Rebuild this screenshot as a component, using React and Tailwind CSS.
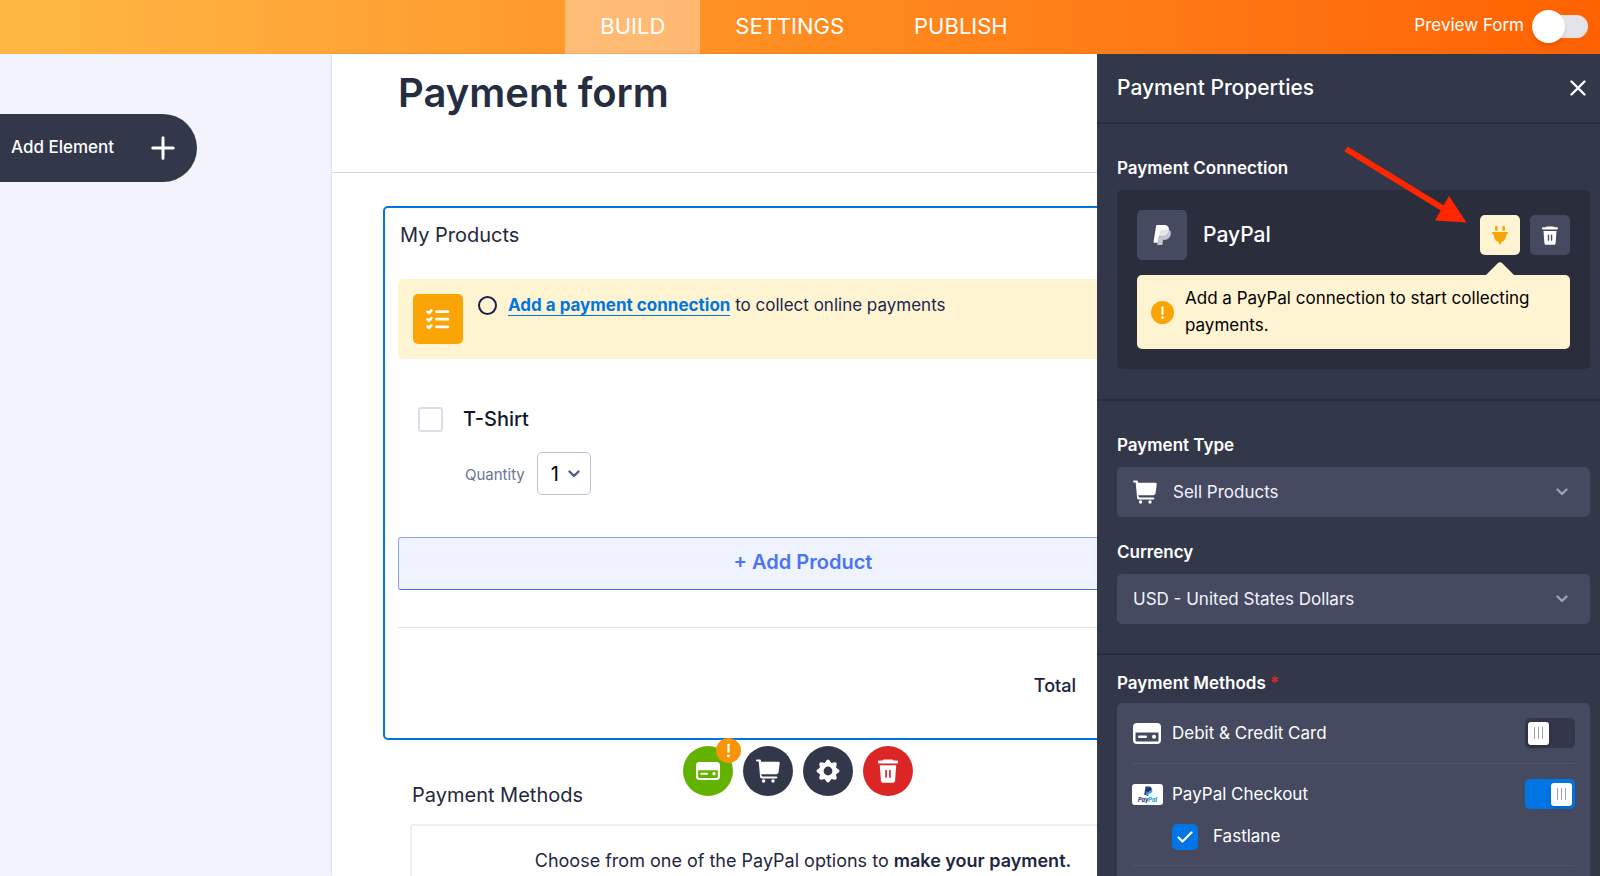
import React from "react";

const PAYPAL_FRONT =
  "M7.076 21.337H2.47a.641.641 0 0 1-.633-.74L4.944.901C5.026.382 5.474 0 5.998 0h7.46c2.57 0 4.578.543 5.69 1.81 1.01 1.15 1.304 2.42 1.012 4.287-.023.143-.047.288-.077.437-.983 5.05-4.349 6.797-8.647 6.797h-2.19c-.524 0-.968.382-1.05.9l-1.12 7.106z";
const PAYPAL_BACK =
  "M21.222 6.917a3.35 3.35 0 0 0-.607-.541c-.013.076-.026.175-.041.254-.93 4.778-4.005 7.201-9.138 7.201h-2.19a.563.563 0 0 0-.556.479l-1.187 7.527h-.506l-.24 1.516a.56.56 0 0 0 .554.647h3.882c.46 0 .85-.334.922-.788.06-.26.76-4.852.816-5.09a.932.932 0 0 1 .923-.788h.58c3.76 0 6.705-1.528 7.565-5.946.36-1.847.174-3.388-.777-4.471z";
const PAYPAL_FOLD =
  "M20.08 6.53c-1.1-.7-2.6-.9-4.3-.9h-4.6c-.6 0-1 .4-1.1.9l-1.5 7.3c.2-.3.4-.5.8-.5h2.06c4.3 0 7.66-1.75 8.64-6.8z";

function PayPalMark({ className, front, back, fold }) {
  return (
    <svg viewBox="0 0 24 24" className={className} aria-hidden="true">
      <path d={PAYPAL_BACK} fill={back} stroke={back} strokeWidth="1" />
      <path d={PAYPAL_FRONT} fill={front} />
      <path d={PAYPAL_FOLD} fill={fold} />
    </svg>
  );
}

function CartIcon({ className }) {
  return (
    <svg viewBox="0 0 24 24" className={className} fill="currentColor" aria-hidden="true">
      <path d="M1 .6h2.6c.8 0 1.3.5 1.4 1.2l.1 1h17.4c.8 0 1.3.6 1.2 1.400l-1.100 8.800c-.2 1.300-1.100 2.200-2.400 2.200H5.200L6 17.600h14.400a.9.900 0 0 1 0 1.800H5.700c-.9 0-1.500-.6-1.600-1.400L2.700 2.400H1A.9.900 0 0 1 1 .6z" />
      <circle cx="7.600" cy="22" r="1.700" />
      <circle cx="17" cy="22" r="1.700" />
    </svg>
  );
}

function TrashIcon({ className }) {
  return (
    <svg viewBox="0 0 20 24" className={className} fill="currentColor" aria-hidden="true">
      <path d="M6 .6h8c.7 0 1 .5 1.200 1H19a1 1 0 0 1 1 1v.8a1 1 0 0 1-1 1H1a1 1 0 0 1-1-1v-.8a1 1 0 0 1 1-1h3.800C5 1.100 5.300.6 6 .6z" />
      <path
        fillRule="evenodd"
        d="M1.800 6.200h16.400l-1.100 15.200c-.1 1.500-1.200 2.400-2.600 2.400h-9c-1.400 0-2.500-.9-2.600-2.400zM7.200 11.500v6.400a.8.800 0 0 0 1.700 0v-6.400a.8.800 0 0 0-1.700 0zm3.900 0v6.400a.8.800 0 0 0 1.700 0v-6.400a.8.800 0 0 0-1.700 0z"
      />
    </svg>
  );
}

function CardIcon({ className }) {
  return (
    <svg viewBox="0 0 28 21" className={className} fill="currentColor" aria-hidden="true">
      <path
        fillRule="evenodd"
        d="M4 0h20a4 4 0 0 1 4 4v13a4 4 0 0 1-4 4H4a4 4 0 0 1-4-4V4a4 4 0 0 1 4-4zM2.500 9.500v7.500c0 1 .6 1.600 1.600 1.600h19.800c1 0 1.600-.6 1.600-1.600V9.500z"
      />
      <rect x="5" y="12.400" width="9" height="2.600" rx="1.200" />
      <circle cx="21" cy="13.800" r="2" />
    </svg>
  );
}

function GearIcon({ className }) {
  return (
    <svg viewBox="-12 -12 24 24" className={className} aria-hidden="true">
      <circle r="6.600" fill="none" stroke="currentColor" strokeWidth="4.400" />
      {[0, 45, 90, 135, 180, 225, 270, 315].map((angle) => (
        <path
          key={angle}
          d="M-3-7.600L-.8-10.900H.8L3-7.600z"
          fill="currentColor"
          stroke="currentColor"
          strokeWidth="1"
          strokeLinejoin="round"
          transform={`rotate(${angle})`}
        />
      ))}
    </svg>
  );
}

function PlugIcon({ className }) {
  return (
    <svg viewBox="0 0 16 19" className={className} fill="currentColor" aria-hidden="true">
      <rect x="3" y="0" width="2.600" height="4.800" rx="1.200" />
      <rect x="10.400" y="0" width="2.600" height="4.800" rx="1.200" />
      <path d="M1.200 6h13.600a1.100 1.100 0 0 1 0 2.400h-.5c0 3.700-1.700 6.400-4.900 7.600l-.4 1.500a1 1 0 0 1-2 0l-.4-1.500c-3.200-1.200-4.900-3.900-4.900-7.600h-.5A1.100 1.100 0 0 1 1.200 6z" />
    </svg>
  );
}

function ChecklistIcon({ className }) {
  return (
    <svg viewBox="0 0 24 20" className={className} fill="none" stroke="currentColor" strokeLinecap="round" strokeLinejoin="round" aria-hidden="true">
      <path strokeWidth="2.800" d="M10.500 2.600h11.500M10.500 10.200h11.500M10.500 17.800h11.500" />
      <path strokeWidth="2.600" d="M1.600 2.800l1.300 1.400L5.400 1.500M1.600 10.400l1.300 1.400 2.500-2.700M1.600 17.600l1.300 1.400 2.500-2.700" />
    </svg>
  );
}

function Chevron({ className }) {
  return (
    <svg viewBox="0 0 12 8" className={className} fill="none" stroke="currentColor" strokeWidth="2.400" strokeLinecap="round" strokeLinejoin="round" aria-hidden="true">
      <path d="M1.500 1.500L6 6l4.500-4.500" />
    </svg>
  );
}

function Exclaim({ className }) {
  return (
    <svg viewBox="0 0 24 24" className={className} aria-hidden="true">
      <circle cx="12" cy="12" r="12" fill="currentColor" />
      <rect x="10.900" y="5.500" width="2.200" height="9" rx="1.100" fill="#fff" />
      <circle cx="12" cy="17.300" r="1.400" fill="#fff" />
    </svg>
  );
}

function TopBar() {
  return (
    <header className="grid h-[54px] shrink-0 grid-cols-[1fr_auto_1fr] bg-linear-to-r from-[#ffb843] via-[#ff8c20] to-[#ff6100] text-white">
      <div />
      <nav className="ml-2 flex text-[22px]">
        <a href="#build" className="flex items-center bg-white/35 px-[35px] pb-0.5">BUILD</a>
        <a href="#settings" className="flex items-center px-[35px] pb-0.5">SETTINGS</a>
        <a href="#publish" className="flex items-center px-[35px] pb-0.5">PUBLISH</a>
      </nav>
      <label className="flex items-center justify-end gap-2 pr-3 pb-0.5 text-[17px]">
        Preview Form
        <input type="checkbox" role="switch" className="peer sr-only" />
        <span className="flex h-[34px] w-14 items-center">
          <span className="z-10 size-[33px] shrink-0 rounded-full bg-white shadow-md" />
          <span className="-ml-5 h-[23px] flex-1 rounded-r-full bg-[#e3e3ea]" />
        </span>
      </label>
    </header>
  );
}

function ToolButton({ label, className, children }) {
  return (
    <button type="button" aria-label={label} className={`relative flex size-[50px] items-center justify-center rounded-full text-white ${className}`}>
      {children}
    </button>
  );
}

function FormCanvas() {
  return (
    <main className="min-w-0 flex-1 overflow-hidden bg-white text-[#0a1551] shadow-[0_0_2px_rgba(50,50,90,0.25)]">
      <div className="w-[942px]">
        <div className="border-b border-[#d7d8e1] px-[66px] pt-[15px] pb-[55px]">
          <h1 className="text-[40px] leading-[48px] font-semibold text-[#252d40]">Payment form</h1>
        </div>

        <section className="mx-[51px] mt-[33px] h-[534px] rounded-[5px] border-2 border-[#0075e3] px-[13px]">
          <h2 className="px-0.5 pt-[11px] text-xl leading-8 text-[#1f2740]">My Products</h2>

          <div className="mt-7 flex h-20 items-start gap-[15px] rounded-[5px] bg-[#fff4d1] p-[15px]">
            <span className="flex size-[50px] items-center justify-center rounded-[5px] bg-[#faa405] text-white">
              <ChecklistIcon className="h-5 w-6" />
            </span>
            <p className="flex items-center gap-[11px] text-[17px] leading-[22px] text-[#1c1f4e]">
              <span className="size-[19px] rounded-full border-2 border-[#1a1f4e]" />
              <span>
                <a href="#connect" className="border-b border-[#0075e3] font-bold text-[#0075e3]">Add a payment connection</a> to collect online payments
              </span>
            </p>
          </div>

          <div className="mt-[47px] pl-5">
            <label className="flex items-center gap-5 text-xl leading-[26px] font-medium text-[#111827]">
              <input type="checkbox" className="size-[25px] appearance-none rounded-[3px] border-2 border-[#dcdde9] bg-white" />
              T-Shirt
            </label>
            <div className="mt-5 flex items-center gap-3 pl-[47px]">
              <label htmlFor="qty" className="pt-1 text-[15px] text-[#6b7391]">Quantity</label>
              <div className="relative flex items-center">
                <select id="qty" className="h-[43px] w-[54px] appearance-none rounded-[5px] border border-[#bcc2d1] bg-white pl-[13px] text-xl text-black">
                  <option>1</option>
                </select>
                <Chevron className="pointer-events-none absolute right-[11px] h-2 w-3 text-[#4f5b80]" />
              </div>
            </div>
          </div>

          <button type="button" className="mt-[42px] block h-[53px] w-full rounded-[3px] border border-[#8ba4f7] border-b-[#4573e3] bg-[#eef3ff] pb-1 text-xl font-semibold text-[#4a74f5]">
            + Add Product
          </button>

          <hr className="mt-[37px] border-[#e2e3ea]" />
          <div className="mt-11 flex pr-[132px] text-lg font-medium text-[#1b2140]">
            <span className="ml-auto">Total</span>
          </div>
        </section>

        <div className="mt-[6px] flex h-[50px] justify-center gap-[10px] pr-[10px]">
          <ToolButton label="Payment connection" className="bg-[#64b200]">
            <CardIcon className="h-[18px] w-6" />
            <Exclaim className="absolute -top-2 -right-2 size-[25px] text-[#f89406]" />
          </ToolButton>
          <ToolButton label="Product list" className="bg-[#33374a]"><CartIcon className="size-6" /></ToolButton>
          <ToolButton label="Settings" className="bg-[#33374a]"><GearIcon className="size-6" /></ToolButton>
          <ToolButton label="Delete" className="bg-[#dc2626]"><TrashIcon className="h-6 w-5" /></ToolButton>
        </div>

        <section className="-mt-4 px-[78px] text-[#1f2740]">
          <h2 className="px-0.5 text-xl leading-[30px]">Payment Methods</h2>
          <div className="mt-[14px] h-40 rounded-[4px] border-2 border-[#f0f0f3] pt-[22px] text-center text-lg leading-[26px]">
            Choose from one of the PayPal options to <strong className="font-semibold">make your payment.</strong>
          </div>
        </section>
      </div>
    </main>
  );
}

function FieldSelect({ id, label, value, icon }) {
  return (
    <div>
      <label htmlFor={id} className="block text-[17px] leading-6 font-semibold">{label}</label>
      <div className="relative mt-[10px] flex items-center">
        {icon}
        <select id={id} className={`h-[50px] w-full appearance-none rounded-[5px] bg-[#454a60] pt-0.5 text-[17px] text-[#f3f3fe] ${icon ? "pl-14" : "pl-4"}`}>
          <option>{value}</option>
        </select>
        <Chevron className="pointer-events-none absolute right-[22px] h-2 w-3 text-[#9ea2b8]" />
      </div>
    </div>
  );
}

function Switch({ label, defaultChecked }) {
  return (
    <label className="ml-auto flex h-[30px] w-[50px] items-center rounded-[5px] bg-[#33374a] px-[3px] has-checked:justify-end has-checked:bg-[#0075e3]">
      <input type="checkbox" role="switch" aria-label={label} defaultChecked={defaultChecked} className="sr-only" />
      <span className="flex h-[23px] w-[21px] items-center justify-center gap-[3px] rounded-[3px] bg-white shadow-md">
        <span className="h-3 w-px bg-[#9a9fb5]" />
        <span className="h-3 w-px bg-[#9a9fb5]" />
        <span className="h-3 w-px bg-[#9a9fb5]" />
      </span>
    </label>
  );
}

function PropertiesPanel() {
  return (
    <aside className="relative w-[503px] shrink-0 overflow-hidden bg-[#33374a] text-white">
      <div className="flex h-[70px] items-center justify-between border-b-2 border-[#2a2d3b] pr-[14px] pl-5">
        <h2 className="text-[21px] font-medium">Payment Properties</h2>
        <button type="button" aria-label="Close">
          <svg viewBox="0 0 16 16" className="size-4" fill="none" stroke="currentColor" strokeWidth="2.400" strokeLinecap="round" aria-hidden="true">
            <path d="M1.500 1.500l13 13M14.500 1.500l-13 13" />
          </svg>
        </button>
      </div>

      <section className="border-b-2 border-[#2a2d3b] pt-8 pr-[10px] pb-[30px] pl-5">
        <h3 className="text-[17px] leading-6 font-semibold">Payment Connection</h3>
        <div className="mt-[10px] rounded-[5px] bg-[#2a2d3b] p-5">
          <div className="flex items-center">
            <span className="flex size-[50px] items-center justify-center rounded-[5px] bg-[#454a60]">
              <PayPalMark className="size-5" front="#ffffff" back="#c3c6d0" fold="#e4e5ea" />
            </span>
            <span className="ml-4 flex-1 text-[21px] font-medium">PayPal</span>
            <button type="button" aria-label="Connect PayPal" className="flex size-10 items-center justify-center rounded-[5px] bg-[#fff4d1] text-[#faa405]">
              <PlugIcon className="h-[19px] w-4" />
            </button>
            <button type="button" aria-label="Remove PayPal" className="ml-[10px] flex size-10 items-center justify-center rounded-[5px] bg-[#454a60]">
              <TrashIcon className="h-[19px] w-4" />
            </button>
          </div>
          <div className="relative mt-[15px] flex items-center gap-[11px] rounded-[5px] bg-[#fff4d1] py-[10px] pr-4 pl-[14px]">
            <svg viewBox="0 0 28 13" className="absolute right-14 bottom-full h-[13px] w-7 text-[#fff4d1]" fill="currentColor" aria-hidden="true">
              <path d="M0 13L11.500 1.400Q14-.9 16.500 1.400L28 13z" />
            </svg>
            <Exclaim className="size-[23px] shrink-0 text-[#faa405]" />
            <p className="text-[17px] leading-[27px] text-black">Add a PayPal connection to start collecting payments.</p>
          </div>
        </div>
      </section>

      <section className="flex flex-col gap-[23px] border-b-2 border-[#2a2d3b] pt-8 pr-[10px] pb-[29px] pl-5">
        <FieldSelect
          id="type"
          label="Payment Type"
          value="Sell Products"
          icon={<CartIcon className="pointer-events-none absolute left-4 size-6" />}
        />
        <FieldSelect id="currency" label="Currency" value="USD - United States Dollars" />
      </section>

      <section className="pt-4 pr-[10px] pl-5">
        <h3 className="text-[17px] leading-6 font-semibold">
          Payment Methods <span className="text-[#dc2626]">*</span>
        </h3>
        <div className="mt-2 rounded-[5px] bg-[#454a60] px-[15px] pb-[30px] text-[17px]">
          <div className="flex items-center border-b border-[#4d5473] py-[15px]">
            <CardIcon className="ml-px h-[21px] w-7" />
            <span className="ml-[11px] pt-0.5">Debit &amp; Credit Card</span>
            <Switch label="Debit & Credit Card" />
          </div>
          <div className="border-b border-[#4d5473] py-[15px]">
            <div className="flex items-center">
              <svg viewBox="0 0 31 21" className="h-[21px] w-[31px]" aria-hidden="true">
                <rect width="31" height="21" rx="3" fill="#fff" />
                <g transform="translate(11.500 2.500) scale(.4)">
                  <path d={PAYPAL_BACK} fill="#179bd7" />
                  <path d={PAYPAL_FRONT} fill="#253b80" />
                  <path d={PAYPAL_FOLD} fill="#222d65" />
                </g>
                <text x="15.500" y="17.500" textAnchor="middle" fontSize="5.500" fontWeight="800" fontStyle="italic" fontFamily="Inter, sans-serif">
                  <tspan fill="#253b80">Pay</tspan>
                  <tspan fill="#179bd7">Pal</tspan>
                </text>
              </svg>
              <span className="ml-[9px] pt-0.5">PayPal Checkout</span>
              <Switch label="PayPal Checkout" defaultChecked />
            </div>
            <label className="mt-[15px] flex items-center gap-[15px] pl-10">
              <span className="relative flex size-[26px] items-center justify-center">
                <input type="checkbox" defaultChecked className="size-[26px] appearance-none rounded-[5px] bg-[#0075e3]" />
                <svg viewBox="0 0 16 12" className="pointer-events-none absolute h-3 w-4" fill="none" stroke="currentColor" strokeWidth="2.200" strokeLinecap="round" strokeLinejoin="round" aria-hidden="true">
                  <path d="M1.500 6.500l4 4L14.500 1.500" />
                </svg>
              </span>
              Fastlane
            </label>
          </div>
        </div>
      </section>

      <svg viewBox="0 0 130 84" className="pointer-events-none absolute top-[88px] right-[130px] h-[84px] w-[130px]" aria-hidden="true">
        <path d="M6 7L104 67" stroke="#ff2600" strokeWidth="6" />
        <path d="M126.500 80.500L109 54 95 78.500z" fill="#ff2600" />
      </svg>
    </aside>
  );
}

export default function App() {
  return (
    <div className="flex h-screen flex-col overflow-hidden font-['Inter',sans-serif]">
      <TopBar />
      <div className="flex min-h-0 flex-1">
        <div className="w-[332px] shrink-0 bg-[#f3f3fe] pt-[60px]">
          <button type="button" className="flex h-[68px] w-[197px] items-center justify-between rounded-r-full bg-[#33374a] pr-[22px] pl-[11px] text-[17px] font-medium text-white">
            Add Element
            <svg viewBox="0 0 24 24" className="size-6" stroke="currentColor" strokeWidth="3" strokeLinecap="round" aria-hidden="true">
              <path d="M12 1.800v20.400M1.800 12h20.400" />
            </svg>
          </button>
        </div>
        <FormCanvas />
        <PropertiesPanel />
      </div>
    </div>
  );
}
